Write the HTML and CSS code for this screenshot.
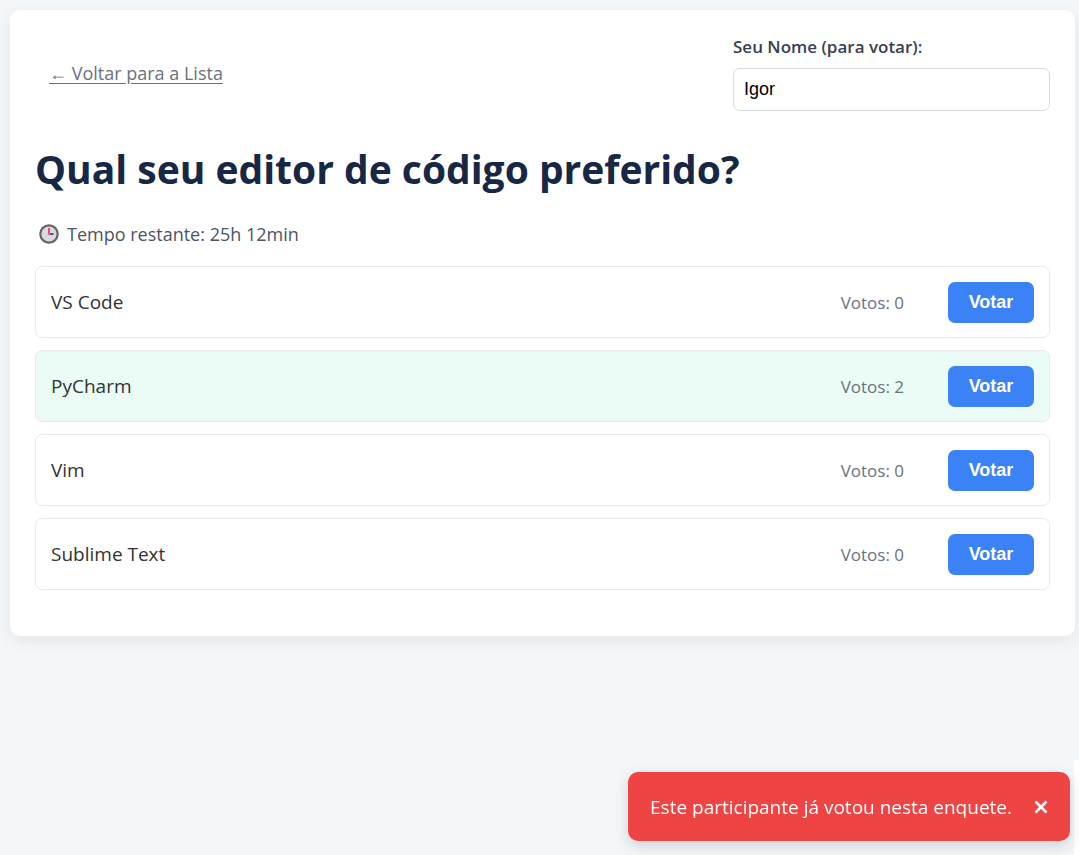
FILE: index.html
```html
<!DOCTYPE html>
<html lang="pt-BR">
<head>
<meta charset="utf-8">
<meta name="viewport" content="width=device-width, initial-scale=1">
<title>Enquete</title>
<link rel="stylesheet" href="styles.css">
</head>
<body>
<main class="card">
  <header class="top">
    <a class="back" href="#">← Voltar para a Lista</a>
    <div class="voter">
      <label class="voter-label" for="voter">Seu Nome (para votar):</label>
      <input class="voter-input" id="voter" type="text" value="Igor">
    </div>
  </header>
  <h1 class="title">Qual seu editor de código preferido?</h1>
  <p class="remaining">
    <svg class="clock" viewBox="0 0 20 20" aria-hidden="true">
      <circle cx="10" cy="10" r="8.7" fill="#dcd8e2" stroke="#67646a" stroke-width="2.2"/>
      <path d="M10 10h4.6" stroke="#433b6b" stroke-width="1.7"/>
      <path d="M10 10.6V4" stroke="#f2416c" stroke-width="1.9"/>
      <circle cx="10" cy="10" r="1.1" fill="#998ea5"/>
    </svg>
    <span>Tempo restante: 25h 12min</span>
  </p>
  <ul class="options">
    <li class="option"><span class="name">VS Code</span><span class="votes">Votos: 0</span><button class="vote" type="button">Votar</button></li>
    <li class="option leading"><span class="name">PyCharm</span><span class="votes">Votos: 2</span><button class="vote" type="button">Votar</button></li>
    <li class="option"><span class="name">Vim</span><span class="votes">Votos: 0</span><button class="vote" type="button">Votar</button></li>
    <li class="option"><span class="name">Sublime Text</span><span class="votes">Votos: 0</span><button class="vote" type="button">Votar</button></li>
  </ul>
</main>
<div class="toast" role="alert">
  <span>Este participante já votou nesta enquete.</span>
  <button class="close" type="button" aria-label="Fechar">
    <svg class="close-icon" viewBox="0 0 14 14" aria-hidden="true"><path d="M1.5 1.5l11 11M12.5 1.5l-11 11" stroke="currentColor" stroke-width="2.6"/></svg>
  </button>
</div>
</body>
</html>
```
FILE: styles.css
```css
* {
  box-sizing: border-box;
}

body {
  margin: 0;
  min-height: 100vh;
  padding: 10px 4px 10px 10px;
  background: linear-gradient(#fff, #fff) right bottom / 5px 95px no-repeat #f3f7fa;
  color: #333;
  font-family: "Segoe UI", "Open Sans", "Noto Sans", sans-serif;
  font-size: 19px;
}

.card {
  padding: 24px 25px 46px;
  background: #fff;
  border-radius: 10px;
  box-shadow: 0 5px 16px rgba(0, 0, 0, 0.07);
}

.top {
  display: flex;
  justify-content: space-between;
  align-items: center;
}

.back {
  margin-left: 14px;
  color: #6b7280;
  font-size: 18px;
  text-underline-offset: 3px;
}

.voter {
  display: flex;
  flex-direction: column;
  gap: 8px;
  width: 317px;
}

.voter-label {
  color: #374151;
  font-size: 17px;
  font-weight: 600;
  line-height: 26px;
}

.voter-input {
  width: 100%;
  height: 43px;
  padding: 0 10px;
  border: 1px solid #d5d9e0;
  border-radius: 7px;
  background: #fff;
  color: #000;
  font-family: "Liberation Sans", Arial, sans-serif;
  font-size: 18px;
}

.title {
  margin: 32px 0 27px;
  color: #172845;
  font-size: 39px;
  font-weight: 700;
  line-height: 52px;
}

.remaining {
  display: flex;
  align-items: center;
  gap: 8px;
  margin: 0 0 20px 4px;
  color: #4b5563;
  font-size: 18px;
  line-height: 24px;
}

.clock {
  width: 20px;
  height: 20px;
}

.options {
  display: flex;
  flex-direction: column;
  gap: 12px;
  margin: 0;
  padding: 0;
  list-style: none;
}

.option {
  display: flex;
  align-items: center;
  min-height: 72px;
  padding: 14px 15px;
  border: 1px solid #e8e9ec;
  border-radius: 7px;
}

.leading {
  background: #eafcf5;
}

.name {
  flex: 1;
}

.votes {
  margin-right: 44px;
  color: #6b7280;
  font-size: 17px;
}

.vote {
  width: 86px;
  height: 41px;
  padding: 0;
  border: 0;
  border-radius: 7px;
  background: #3b82f6;
  color: #fff;
  font-family: "Liberation Sans", Arial, sans-serif;
  font-size: 18px;
  font-weight: 700;
}

.toast {
  position: fixed;
  right: 9px;
  bottom: 14px;
  display: flex;
  align-items: center;
  gap: 22px;
  min-height: 69px;
  padding: 0 22px;
  border-radius: 10px;
  background: #ef4444;
  box-shadow: 0 5px 15px rgba(0, 0, 0, 0.15);
  color: #fff;
}

.close {
  display: flex;
  padding: 0;
  border: 0;
  background: none;
  color: #fff;
}

.close-icon {
  width: 14px;
  height: 14px;
}
```
